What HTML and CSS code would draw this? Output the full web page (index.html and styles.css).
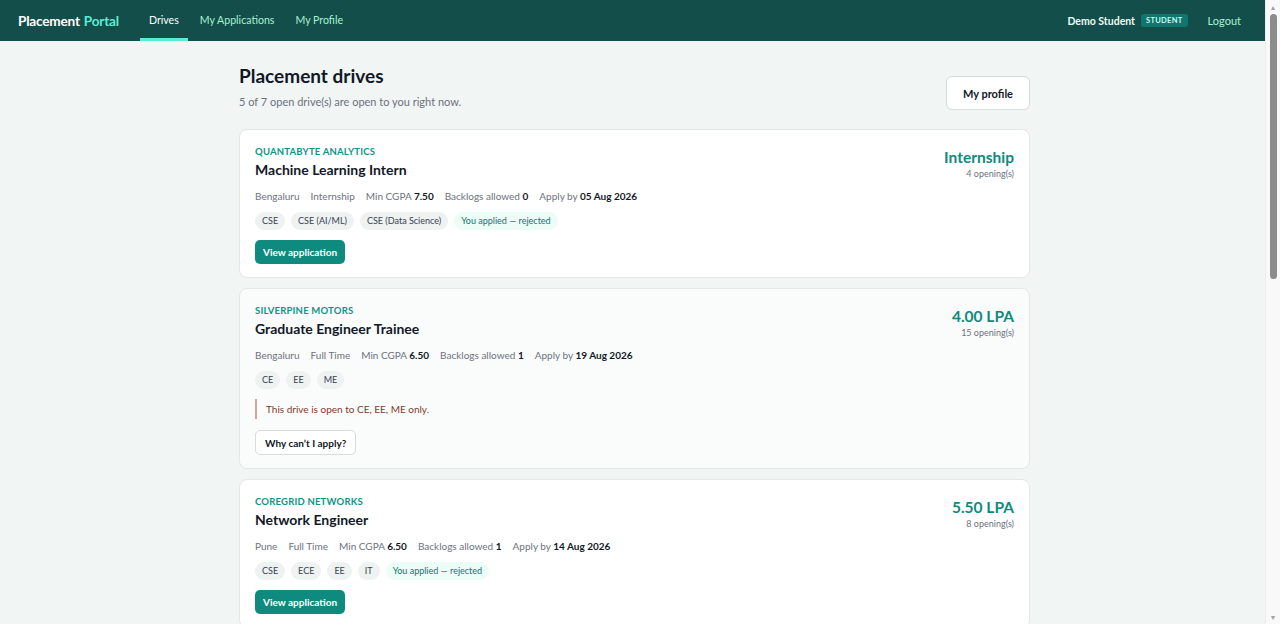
FILE: index.html
```html
<!DOCTYPE html>
<html lang="en">
<head>
<meta charset="utf-8">
<title>Placement Portal</title>
<link rel="stylesheet" href="styles.css">
</head>
<body>
<header class="topbar">
  <div class="brand">Placement <span class="brand-accent">Portal</span></div>
  <nav class="nav">
    <a class="nav-link active" href="#">Drives</a>
    <a class="nav-link" href="#">My Applications</a>
    <a class="nav-link" href="#">My Profile</a>
  </nav>
  <div class="user">
    <span class="user-name">Demo Student</span>
    <span class="role-badge">STUDENT</span>
    <a class="logout" href="#">Logout</a>
  </div>
</header>

<main class="page">
  <div class="page-head">
    <div>
      <h1 class="page-title">Placement drives</h1>
      <p class="page-sub">5 of 7 open drive(s) are open to you right now.</p>
    </div>
    <button class="btn btn-outline btn-lg">My profile</button>
  </div>

  <section class="card">
    <div class="card-main">
      <div class="company">QUANTABYTE ANALYTICS</div>
      <h2 class="role">Machine Learning Intern</h2>
      <div class="meta">
        <span>Bengaluru</span>
        <span>Internship</span>
        <span>Min CGPA <b>7.50</b></span>
        <span>Backlogs allowed <b>0</b></span>
        <span>Apply by <b>05 Aug 2026</b></span>
      </div>
      <div class="tags">
        <span class="tag">CSE</span>
        <span class="tag">CSE (AI/ML)</span>
        <span class="tag">CSE (Data Science)</span>
        <span class="tag tag-status">You applied — rejected</span>
      </div>
      <button class="btn btn-primary">View application</button>
    </div>
    <div class="card-side">
      <div class="pay">Internship</div>
      <div class="openings">4 opening(s)</div>
    </div>
  </section>

  <section class="card card-muted">
    <div class="card-main">
      <div class="company">SILVERPINE MOTORS</div>
      <h2 class="role">Graduate Engineer Trainee</h2>
      <div class="meta">
        <span>Bengaluru</span>
        <span>Full Time</span>
        <span>Min CGPA <b>6.50</b></span>
        <span>Backlogs allowed <b>1</b></span>
        <span>Apply by <b>19 Aug 2026</b></span>
      </div>
      <div class="tags">
        <span class="tag">CE</span>
        <span class="tag">EE</span>
        <span class="tag">ME</span>
      </div>
      <div class="notice">This drive is open to CE, EE, ME only.</div>
      <button class="btn btn-outline btn-why">Why can’t I apply?</button>
    </div>
    <div class="card-side">
      <div class="pay">4.00 LPA</div>
      <div class="openings">15 opening(s)</div>
    </div>
  </section>

  <section class="card">
    <div class="card-main">
      <div class="company">COREGRID NETWORKS</div>
      <h2 class="role">Network Engineer</h2>
      <div class="meta">
        <span>Pune</span>
        <span>Full Time</span>
        <span>Min CGPA <b>6.50</b></span>
        <span>Backlogs allowed <b>1</b></span>
        <span>Apply by <b>14 Aug 2026</b></span>
      </div>
      <div class="tags">
        <span class="tag">CSE</span>
        <span class="tag">ECE</span>
        <span class="tag">EE</span>
        <span class="tag">IT</span>
        <span class="tag tag-status">You applied — rejected</span>
      </div>
      <button class="btn btn-primary">View application</button>
    </div>
    <div class="card-side">
      <div class="pay">5.50 LPA</div>
      <div class="openings">8 opening(s)</div>
    </div>
  </section>

  <section class="card">
    <div class="card-main">
      <div class="company">NORTHWIND SYSTEMS</div>
      <h2 class="role">Software Engineer</h2>
      <div class="meta">
        <span>Hyderabad</span>
        <span>Full Time</span>
        <span>Min CGPA <b>7.00</b></span>
        <span>Backlogs allowed <b>0</b></span>
        <span>Apply by <b>22 Aug 2026</b></span>
      </div>
      <div class="tags">
        <span class="tag">CSE</span>
        <span class="tag">IT</span>
      </div>
      <button class="btn btn-primary">Apply now</button>
    </div>
    <div class="card-side">
      <div class="pay">8.00 LPA</div>
      <div class="openings">10 opening(s)</div>
    </div>
  </section>
</main>
<div class="scroll-track" aria-hidden="true">
  <span class="scroll-arrow">▲</span>
  <span class="scroll-thumb"></span>
  <span class="scroll-arrow scroll-arrow-down">▼</span>
</div>
</body>
</html>
```

FILE: styles.css
```css
* { box-sizing: border-box; }

html, body {
  margin: 0;
  padding: 0;
}

html {
  background: #f1f5f4;
}

body {
  margin-right: 15px;
  background: #f1f5f4;
  font-family: Lato, "Noto Sans", "Liberation Sans", sans-serif;
  color: #1f2933;
  font-size: 11px;
}

.scroll-track {
  position: fixed;
  top: 0;
  right: 0;
  width: 15px;
  height: 100vh;
  background: #f9f9f9;
  border-left: 1px solid #ededed;
  display: flex;
  flex-direction: column;
  align-items: center;
}

.scroll-arrow {
  font-size: 7px;
  line-height: 14px;
  color: #a3a3a3;
}

.scroll-arrow-down {
  margin-top: auto;
}

.scroll-thumb {
  width: 7px;
  height: 265px;
  border-radius: 4px;
  background: #8c8c8c;
}

.topbar {
  height: 41px;
  background: #134e4a;
  display: flex;
  align-items: stretch;
  padding: 0 24px 0 18px;
}

.brand {
  display: flex;
  align-items: center;
  font-weight: 700;
  font-size: 13.6px;
  color: #ffffff;
  margin-right: 21px;
  letter-spacing: -0.2px;
}

.brand-accent {
  color: #5eead4;
  margin-left: 4px;
}

.nav {
  display: flex;
  align-items: stretch;
  gap: 3px;
}

.nav-link {
  display: flex;
  align-items: center;
  padding: 3px 9px 2px;
  color: #a7f3d0;
  text-decoration: none;
  font-size: 10.6px;
  border-bottom: 3px solid transparent;
}

.nav-link.active {
  color: #ffffff;
  border-bottom-color: #5eead4;
}

.user {
  margin-left: auto;
  display: flex;
  align-items: center;
}

.user-name {
  color: #ecfdf5;
  font-weight: 700;
  font-size: 10.5px;
}

.role-badge {
  margin-left: 6px;
  background: #0f766e;
  color: #ccfbf1;
  font-size: 7.5px;
  font-weight: 700;
  letter-spacing: 0.3px;
  padding: 2px 5px;
  border-radius: 3px;
}

.logout {
  margin-left: 20px;
  color: #a7f3d0;
  text-decoration: none;
  font-size: 11px;
}

.page {
  width: 791px;
  margin: 0 auto;
  padding: 22px 0 40px;
  position: relative;
  left: 2px;
}

.page-head {
  display: flex;
  justify-content: space-between;
  align-items: flex-start;
  margin-bottom: 19px;
}

.page-title {
  margin: 0;
  font-size: 19px;
  font-weight: 700;
  color: #111827;
  line-height: 28px;
  position: relative;
  top: -1px;
}

.page-sub {
  margin: 4px 0 0;
  font-size: 11px;
  color: #6b7280;
}

.btn {
  font-family: inherit;
  font-weight: 700;
  font-size: 10px;
  border-radius: 5px;
  cursor: pointer;
  height: 24px;
  padding: 0 9px;
}

.btn-lg {
  height: 34px;
  font-size: 11px;
  padding: 0 16px;
  margin-top: 13px;
  border-radius: 6px;
}

.btn-primary {
  background: #0f8a7e;
  color: #ffffff;
  border: none;
  padding: 0 8px;
}

.btn-outline {
  background: #ffffff;
  color: #111827;
  border: 1px solid #d6dcdb;
}

.btn-why {
  margin-top: 11px;
  height: 25px;
}

.card {
  background: #ffffff;
  border: 1px solid #e3e8e7;
  border-radius: 8px;
  padding: 16px 15px 13px;
  display: flex;
  justify-content: space-between;
  margin-bottom: 10px;
}

.card-muted {
  background: #fafcfb;
}

.card-main {
  display: flex;
  flex-direction: column;
  align-items: flex-start;
}

.company {
  color: #0d9488;
  font-size: 9.5px;
  font-weight: 700;
  letter-spacing: 0.2px;
  line-height: 12px;
}

.role {
  margin: 2px 0 0;
  font-size: 14px;
  font-weight: 700;
  color: #111827;
  line-height: 20px;
}

.meta {
  display: flex;
  gap: 11px;
  color: #6b7280;
  font-size: 10px;
  margin-top: 9px;
  line-height: 14px;
}

.meta b {
  color: #111827;
  font-weight: 700;
}

.tags {
  display: flex;
  gap: 6px;
  margin-top: 9px;
}

.tag {
  background: #eef2f1;
  color: #374151;
  font-size: 9px;
  border-radius: 9px;
  padding: 0 7px;
  line-height: 18px;
}

.tag-status {
  background: #ecfdf8;
  color: #0f766e;
}

.card-main .btn-primary {
  margin-top: 10px;
}

.notice {
  margin-top: 10px;
  border-left: 2px solid #d4a59a;
  padding: 3px 0 3px 9px;
  color: #7f3b2e;
  font-size: 10px;
  line-height: 14px;
}

.card-side {
  text-align: right;
  padding-top: 1px;
}

.pay {
  color: #0f8a7e;
  font-size: 15.5px;
  font-weight: 700;
  line-height: 20px;
}

.openings {
  color: #6b7280;
  font-size: 9px;
  margin-top: 1px;
}
```
